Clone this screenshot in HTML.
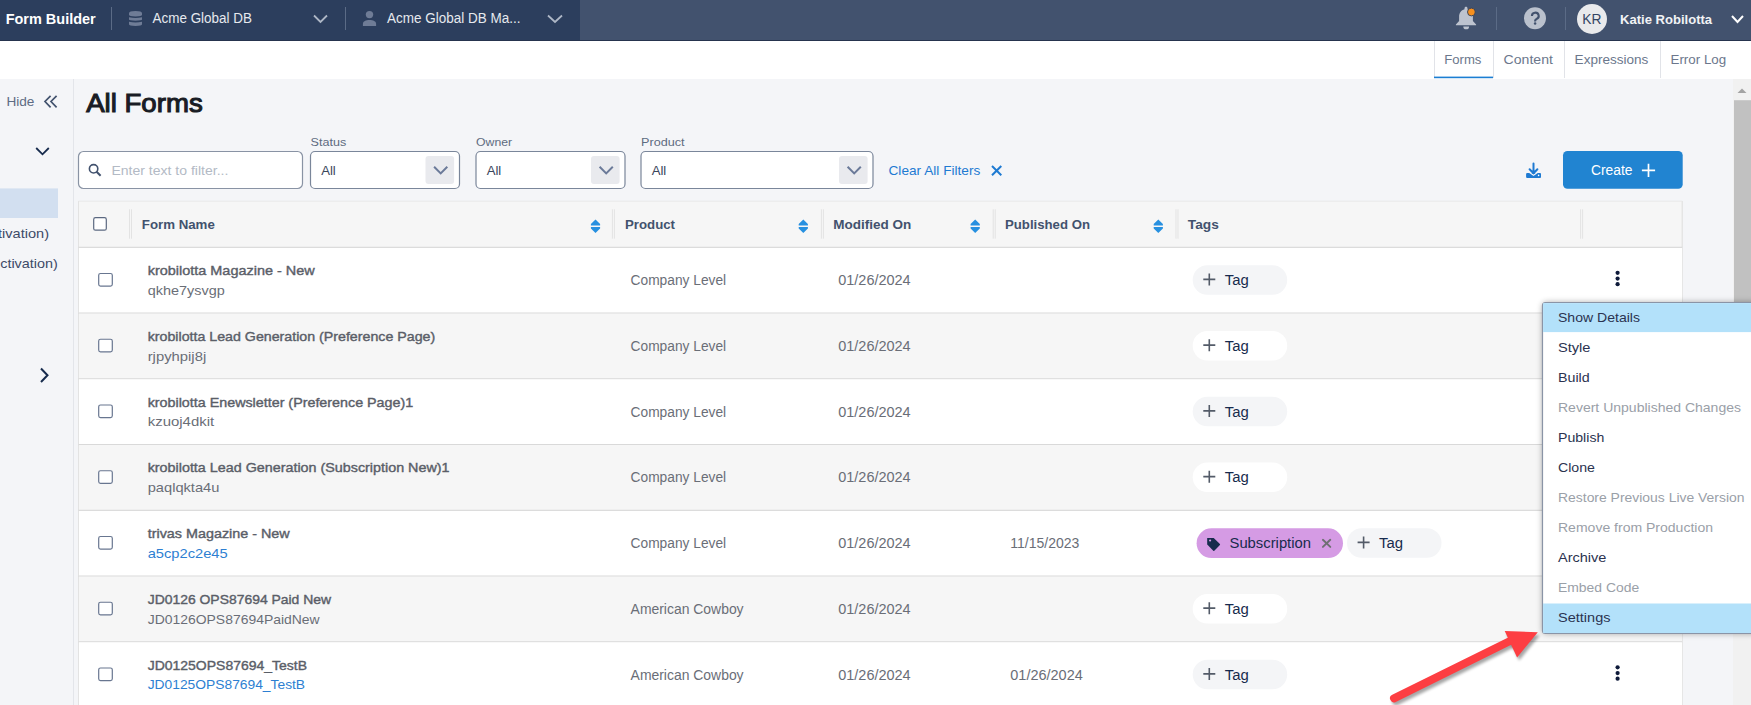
<!DOCTYPE html>
<html><head><meta charset="utf-8">
<style>
*{margin:0;padding:0}
html,body{width:1751px;height:705px;overflow:hidden;background:#f4f5f8}
svg{display:block;font-family:"Liberation Sans", sans-serif}
</style></head><body>
<svg width="1751" height="705" viewBox="0 0 1751 705">
<defs>
<filter id="sh" x="-20%" y="-20%" width="140%" height="140%"><feGaussianBlur stdDeviation="3"/></filter>
<filter id="sh2" x="-20%" y="-20%" width="140%" height="140%"><feGaussianBlur stdDeviation="1.5"/></filter>
</defs>
<rect x="0" y="0" width="1751" height="705" fill="#f4f5f8" />
<rect x="0" y="0" width="1751" height="41" fill="#42526e" />
<rect x="0" y="0" width="580" height="41" fill="#2c3e5d" />
<line x1="0" y1="40.5" x2="1751" y2="40.5" stroke="#26344e" stroke-width="1" />
<text x="5.7" y="24" font-size="15" fill="#ffffff" font-weight="bold" textLength="90" lengthAdjust="spacingAndGlyphs" >Form Builder</text>
<line x1="111.5" y1="7" x2="111.5" y2="30" stroke="#5b6b86" stroke-width="1" />
<path d="M129 13.3 q0 -2.4 6.5 -2.4 q6.5 0 6.5 2.4 v1.6 q0 1.3 -6.5 1.5 q-6.5 -0.2 -6.5 -1.5z M129 17.3 q6.5 1.5 13 0 v2.3 q0 1 -6.5 1.2 q-6.5 -0.2 -6.5 -1.2z M129 21.7 q6.5 1.5 13 0 v2.5 q0 1.7 -6.5 1.7 q-6.5 0 -6.5 -1.7z" fill="#6f7c96" />
<text x="152.6" y="22.8" font-size="14" fill="#e6e9ee" textLength="99.3" lengthAdjust="spacingAndGlyphs" >Acme Global DB</text>
<path d="M314 15.5 L320.5 22 L327 15.5" fill="none" stroke="#aeb7c6" stroke-width="1.8" />
<line x1="345.5" y1="7" x2="345.5" y2="30" stroke="#5b6b86" stroke-width="1" />
<circle cx="369.5" cy="14.6" r="3.7" fill="#6f7c96" />
<path d="M362.9 26 v-2.3 c0-2.6 3-3.8 6.6-3.8 s6.6 1.2 6.6 3.8 v2.3z" fill="#6f7c96" />
<text x="387" y="22.8" font-size="14" fill="#e6e9ee" textLength="133.4" lengthAdjust="spacingAndGlyphs" >Acme Global DB Ma...</text>
<path d="M548 15.5 L555 22 L562 15.5" fill="none" stroke="#aeb7c6" stroke-width="1.8" />
<path d="M1466 6.8 c-0.9 0 -1.5 0.7 -1.5 1.5 v0.9 c-3.4 0.9 -5.4 3.9 -5.4 7.4 v4.3 l-3.2 3.5 v0.8 h20.2 v-0.8 l-3.2 -3.5 v-4.3 c0 -3.5 -2 -6.5 -5.4 -7.4 v-0.9 c0 -0.8 -0.6 -1.5 -1.5 -1.5z M1463.3 26.4 h5.8 a2.9 2.9 0 0 1 -5.8 0z" fill="#bdc3cf" />
<circle cx="1471.4" cy="12" r="3.9" fill="#f7901e" stroke="#2c3e5d" stroke-width="0.9"/>
<line x1="1496.5" y1="7" x2="1496.5" y2="30" stroke="#5b6b86" stroke-width="1" />
<circle cx="1535" cy="18.2" r="11" fill="#bac1cd" />
<path d="M1531.9 16 a3.4 3.3 0 1 1 4.7 3 q-1.5 0.6 -1.5 2 v0.4" fill="none" stroke="#42526e" stroke-width="2.1" />
<circle cx="1535.1" cy="23.6" r="1.25" fill="#42526e" />
<line x1="1565.5" y1="7" x2="1565.5" y2="30" stroke="#5b6b86" stroke-width="1" />
<circle cx="1592" cy="19" r="15" fill="#e9eaec" />
<text x="1582.2" y="23.9" font-size="14" fill="#344563" textLength="19.2" lengthAdjust="spacingAndGlyphs" >KR</text>
<text x="1620.1" y="23.8" font-size="13.5" fill="#f1f2f5" font-weight="bold" textLength="92" lengthAdjust="spacingAndGlyphs" >Katie Robilotta</text>
<path d="M1732 16 L1737.5 22 L1743 16" fill="none" stroke="#ffffff" stroke-width="2" />
<rect x="0" y="41" width="1751" height="38" fill="#ffffff" />
<line x1="1434.5" y1="41" x2="1434.5" y2="78" stroke="#e1e3e8" stroke-width="1" />
<line x1="1493.5" y1="41" x2="1493.5" y2="78" stroke="#e1e3e8" stroke-width="1" />
<line x1="1564.5" y1="41" x2="1564.5" y2="78" stroke="#e1e3e8" stroke-width="1" />
<line x1="1660.5" y1="41" x2="1660.5" y2="78" stroke="#e1e3e8" stroke-width="1" />
<rect x="1434" y="76.6" width="59" height="1.6" fill="#1b7ed3" />
<text x="1444.2" y="64.3" font-size="13.5" fill="#6b778c" textLength="37.2" lengthAdjust="spacingAndGlyphs" >Forms</text>
<text x="1503.6" y="64.3" font-size="13.5" fill="#6b778c" textLength="49.3" lengthAdjust="spacingAndGlyphs" >Content</text>
<text x="1574.6" y="64.3" font-size="13.5" fill="#6b778c" textLength="73.8" lengthAdjust="spacingAndGlyphs" >Expressions</text>
<text x="1670.5" y="64.3" font-size="13.5" fill="#6b778c" textLength="55.7" lengthAdjust="spacingAndGlyphs" >Error Log</text>
<line x1="73.5" y1="79" x2="73.5" y2="705" stroke="#e3e5ea" stroke-width="1" />
<text x="6.4" y="106.3" font-size="13" fill="#5e6c84" textLength="28" lengthAdjust="spacingAndGlyphs" >Hide</text>
<path d="M50.6 95.8 L45 101.5 L50.6 107.3 M56.6 95.8 L51 101.5 L56.6 107.3" fill="none" stroke="#42526e" stroke-width="1.7" />
<path d="M36.2 148 L42.5 154.3 L48.8 148" fill="none" stroke="#172b4d" stroke-width="1.8" />
<rect x="0" y="188.4" width="58" height="29.6" fill="#d2dff0" />
<text x="49" y="238" font-size="13.5" fill="#3d4b68" textLength="51" lengthAdjust="spacingAndGlyphs" text-anchor="end">tivation)</text>
<text x="57.8" y="267.8" font-size="13.5" fill="#3d4b68" textLength="57.6" lengthAdjust="spacingAndGlyphs" text-anchor="end">ctivation)</text>
<path d="M41 368.5 L47.5 375.3 L41 382" fill="none" stroke="#172b4d" stroke-width="2" />
<text x="86.2" y="112" font-size="26.5" fill="#191c24" textLength="116.5" lengthAdjust="spacingAndGlyphs" stroke="#191c24" stroke-width="1.1">All Forms</text>
<rect x="78.5" y="151.5" width="224" height="37" fill="#ffffff" rx="5" stroke="#8993a4" stroke-width="1.2" />
<circle cx="93.6" cy="168.8" r="4.2" fill="none" stroke="#42526e" stroke-width="1.6"/>
<line x1="96.6" y1="171.8" x2="100.6" y2="175.8" stroke="#42526e" stroke-width="2" />
<text x="111.4" y="175" font-size="13.5" fill="#b3bac5" textLength="117" lengthAdjust="spacingAndGlyphs" >Enter text to filter...</text>
<text x="310.6" y="145.8" font-size="11.8" fill="#5e6b80" textLength="35.6" lengthAdjust="spacingAndGlyphs" >Status</text>
<rect x="310.5" y="151.5" width="149" height="37" fill="#ffffff" rx="4.5" stroke="#7a869a" stroke-width="1.2" />
<rect x="425.5" y="156" width="28.6" height="28" fill="#e9eaee" rx="3" />
<path d="M434.1 166.8 L440.7 173.4 L447.3 166.8" fill="none" stroke="#6b7a99" stroke-width="2" />
<text x="321.2" y="174.9" font-size="13.5" fill="#3a465c" textLength="14.6" lengthAdjust="spacingAndGlyphs" >All</text>
<text x="476.1" y="145.8" font-size="11.8" fill="#5e6b80" textLength="36" lengthAdjust="spacingAndGlyphs" >Owner</text>
<rect x="476.0" y="151.5" width="149" height="37" fill="#ffffff" rx="4.5" stroke="#7a869a" stroke-width="1.2" />
<rect x="591.0" y="156" width="28.6" height="28" fill="#e9eaee" rx="3" />
<path d="M599.6 166.8 L606.2 173.4 L612.8 166.8" fill="none" stroke="#6b7a99" stroke-width="2" />
<text x="486.7" y="174.9" font-size="13.5" fill="#3a465c" textLength="14.6" lengthAdjust="spacingAndGlyphs" >All</text>
<text x="641.1" y="145.8" font-size="11.8" fill="#5e6b80" textLength="43.5" lengthAdjust="spacingAndGlyphs" >Product</text>
<rect x="641.0" y="151.5" width="232" height="37" fill="#ffffff" rx="4.5" stroke="#7a869a" stroke-width="1.2" />
<rect x="839.0" y="156" width="28.6" height="28" fill="#e9eaee" rx="3" />
<path d="M847.6 166.8 L854.2 173.4 L860.8 166.8" fill="none" stroke="#6b7a99" stroke-width="2" />
<text x="651.7" y="174.9" font-size="13.5" fill="#3a465c" textLength="14.6" lengthAdjust="spacingAndGlyphs" >All</text>
<text x="888.5" y="174.8" font-size="13.5" fill="#1e7ad2" textLength="91.8" lengthAdjust="spacingAndGlyphs" >Clear All Filters</text>
<path d="M992 166 L1001.3 175.2 M1001.3 166 L992 175.2" fill="none" stroke="#1e7ad2" stroke-width="2" />
<rect x="1526.1" y="173.1" width="14.9" height="4.8" fill="#1e7ad2" rx="1" />
<path d="M1529.6 172.4 L1533.5 175.3 L1537.4 172.4" fill="none" stroke="#f4f5f8" stroke-width="1.3" />
<path d="M1533.5 163.5 V173.2 M1529.6 169.2 L1533.5 173.2 L1537.4 169.2" fill="none" stroke="#1e7ad2" stroke-width="2" stroke-linecap="round" stroke-linejoin="round"/>
<circle cx="1538.6" cy="175.4" r="0.8" fill="#ffffff" />
<rect x="1563" y="151" width="119.7" height="37.7" fill="#2184d1" rx="4.5" />
<text x="1591" y="175" font-size="14" fill="#ffffff" textLength="41.5" lengthAdjust="spacingAndGlyphs" >Create</text>
<path d="M1648.5 163.8 v13.3 M1641.9 170.4 h13.2" fill="none" stroke="#ffffff" stroke-width="1.7" />
<rect x="1733" y="79" width="18" height="626" fill="#f1f1f1" />
<path d="M1737.5 93 L1742 88.5 L1746.5 93z" fill="#a3a3a3" />
<rect x="1734" y="100.2" width="17" height="420" fill="#c1c1c1" />
<rect x="78.5" y="201.2" width="1604" height="504" fill="#ffffff" />
<rect x="78.5" y="201.2" width="1604" height="46" fill="#f6f6f6" />
<line x1="78.5" y1="201" x2="78.5" y2="705" stroke="#e3e3e3" stroke-width="1" />
<line x1="1682.2" y1="201" x2="1682.2" y2="705" stroke="#dcdcdc" stroke-width="1" />
<line x1="78.5" y1="201.2" x2="1682.2" y2="201.2" stroke="#e8e8e8" stroke-width="1" />
<line x1="78.5" y1="247.3" x2="1682.2" y2="247.3" stroke="#d9d9d9" stroke-width="1.2" />
<rect x="93.7" y="217.6" width="12.6" height="12.6" fill="#ffffff" rx="1.8" stroke="#5b6880" stroke-width="1.2" />
<line x1="129.5" y1="209.3" x2="129.5" y2="238.7" stroke="#e3e3e3" stroke-width="1" />
<line x1="131.5" y1="209.3" x2="131.5" y2="238.7" stroke="#e3e3e3" stroke-width="1" />
<line x1="612.4" y1="209.3" x2="612.4" y2="238.7" stroke="#e3e3e3" stroke-width="1" />
<line x1="614.4" y1="209.3" x2="614.4" y2="238.7" stroke="#e3e3e3" stroke-width="1" />
<line x1="821.4" y1="209.3" x2="821.4" y2="238.7" stroke="#e3e3e3" stroke-width="1" />
<line x1="823.4" y1="209.3" x2="823.4" y2="238.7" stroke="#e3e3e3" stroke-width="1" />
<line x1="993.2" y1="209.3" x2="993.2" y2="238.7" stroke="#e3e3e3" stroke-width="1" />
<line x1="995.2" y1="209.3" x2="995.2" y2="238.7" stroke="#e3e3e3" stroke-width="1" />
<line x1="1176" y1="209.3" x2="1176" y2="238.7" stroke="#e3e3e3" stroke-width="1" />
<line x1="1178" y1="209.3" x2="1178" y2="238.7" stroke="#e3e3e3" stroke-width="1" />
<line x1="1580.6" y1="209.3" x2="1580.6" y2="238.7" stroke="#e3e3e3" stroke-width="1" />
<line x1="1582.6" y1="209.3" x2="1582.6" y2="238.7" stroke="#e3e3e3" stroke-width="1" />
<path d="M595.5 219.5 L600.1 224 V225.4 H590.9 V224z M595.5 233.1 L600.1 228.6 V227.1 H590.9 V228.6z" fill="#2790e0" />
<path d="M803.3 219.5 L807.9 224 V225.4 H798.6999999999999 V224z M803.3 233.1 L807.9 228.6 V227.1 H798.6999999999999 V228.6z" fill="#2790e0" />
<path d="M975.2 219.5 L979.8000000000001 224 V225.4 H970.6 V224z M975.2 233.1 L979.8000000000001 228.6 V227.1 H970.6 V228.6z" fill="#2790e0" />
<path d="M1158.3 219.5 L1162.8999999999999 224 V225.4 H1153.7 V224z M1158.3 233.1 L1162.8999999999999 228.6 V227.1 H1153.7 V228.6z" fill="#2790e0" />
<text x="141.8" y="228.7" font-size="13.5" fill="#42526e" font-weight="bold" textLength="73" lengthAdjust="spacingAndGlyphs" >Form Name</text>
<text x="625" y="228.7" font-size="13.5" fill="#42526e" font-weight="bold" textLength="50" lengthAdjust="spacingAndGlyphs" >Product</text>
<text x="833.3" y="228.7" font-size="13.5" fill="#42526e" font-weight="bold" textLength="78" lengthAdjust="spacingAndGlyphs" >Modified On</text>
<text x="1005" y="228.7" font-size="13.5" fill="#42526e" font-weight="bold" textLength="85" lengthAdjust="spacingAndGlyphs" >Published On</text>
<text x="1187.8" y="228.7" font-size="13.5" fill="#42526e" font-weight="bold" textLength="31" lengthAdjust="spacingAndGlyphs" >Tags</text>
<rect x="79" y="247.9" width="1603" height="65.15" fill="#ffffff" />
<line x1="78.5" y1="313.05" x2="1682.2" y2="313.05" stroke="#d9d9d9" stroke-width="1.2" />
<rect x="98.7" y="273.5" width="13.6" height="12.6" fill="#ffffff" rx="1.8" stroke="#687690" stroke-width="1.2" />
<text x="147.7" y="275.1" font-size="13.5" fill="#5a5e68" textLength="167" lengthAdjust="spacingAndGlyphs" stroke="#5a5e68" stroke-width="0.4">krobilotta Magazine - New</text>
<text x="147.7" y="294.90000000000003" font-size="13.5" fill="#6a6e77" textLength="77" lengthAdjust="spacingAndGlyphs" >qkhe7ysvgp</text>
<text x="630.6" y="285.2" font-size="14" fill="#6a6e77" textLength="95.5" lengthAdjust="spacingAndGlyphs" >Company Level</text>
<text x="838.2" y="285.2" font-size="14" fill="#6a6e77" textLength="72.5" lengthAdjust="spacingAndGlyphs" >01/26/2024</text>
<rect x="1192.7" y="265.3" width="94.5" height="29.5" fill="#f4f5f7" rx="14.75" />
<path d="M1209.3 273.40000000000003 v12 M1203.3 279.40000000000003 h12" fill="none" stroke="#535b68" stroke-width="1.6" />
<text x="1224.7" y="285.1" font-size="14" fill="#172b4d" textLength="24" lengthAdjust="spacingAndGlyphs" >Tag</text>
<circle cx="1617.6" cy="272.8" r="2.1" fill="#0e1a3a" />
<circle cx="1617.6" cy="278.6" r="2.1" fill="#0e1a3a" />
<circle cx="1617.6" cy="284.20000000000005" r="2.1" fill="#0e1a3a" />
<rect x="79" y="313.65000000000003" width="1603" height="65.15" fill="#f6f6f6" />
<line x1="78.5" y1="378.8" x2="1682.2" y2="378.8" stroke="#d9d9d9" stroke-width="1.2" />
<rect x="98.7" y="339.25" width="13.6" height="12.6" fill="#ffffff" rx="1.8" stroke="#687690" stroke-width="1.2" />
<text x="147.7" y="340.85" font-size="13.5" fill="#5a5e68" textLength="287.5" lengthAdjust="spacingAndGlyphs" stroke="#5a5e68" stroke-width="0.4">krobilotta Lead Generation (Preference Page)</text>
<text x="147.7" y="360.65000000000003" font-size="13.5" fill="#6a6e77" textLength="58.5" lengthAdjust="spacingAndGlyphs" >rjpyhpij8j</text>
<text x="630.6" y="350.95" font-size="14" fill="#6a6e77" textLength="95.5" lengthAdjust="spacingAndGlyphs" >Company Level</text>
<text x="838.2" y="350.95" font-size="14" fill="#6a6e77" textLength="72.5" lengthAdjust="spacingAndGlyphs" >01/26/2024</text>
<rect x="1192.7" y="331.05" width="94.5" height="29.5" fill="#ffffff" rx="14.75" />
<path d="M1209.3 339.15000000000003 v12 M1203.3 345.15000000000003 h12" fill="none" stroke="#535b68" stroke-width="1.6" />
<text x="1224.7" y="350.85" font-size="14" fill="#172b4d" textLength="24" lengthAdjust="spacingAndGlyphs" >Tag</text>
<circle cx="1617.6" cy="338.55" r="2.1" fill="#0e1a3a" />
<circle cx="1617.6" cy="344.35" r="2.1" fill="#0e1a3a" />
<circle cx="1617.6" cy="349.95000000000005" r="2.1" fill="#0e1a3a" />
<rect x="79" y="379.40000000000003" width="1603" height="65.15" fill="#ffffff" />
<line x1="78.5" y1="444.55" x2="1682.2" y2="444.55" stroke="#d9d9d9" stroke-width="1.2" />
<rect x="98.7" y="405.0" width="13.6" height="12.6" fill="#ffffff" rx="1.8" stroke="#687690" stroke-width="1.2" />
<text x="147.7" y="406.6" font-size="13.5" fill="#5a5e68" textLength="265.5" lengthAdjust="spacingAndGlyphs" stroke="#5a5e68" stroke-width="0.4">krobilotta Enewsletter (Preference Page)1</text>
<text x="147.7" y="426.40000000000003" font-size="13.5" fill="#6a6e77" textLength="66.5" lengthAdjust="spacingAndGlyphs" >kzuoj4dkit</text>
<text x="630.6" y="416.7" font-size="14" fill="#6a6e77" textLength="95.5" lengthAdjust="spacingAndGlyphs" >Company Level</text>
<text x="838.2" y="416.7" font-size="14" fill="#6a6e77" textLength="72.5" lengthAdjust="spacingAndGlyphs" >01/26/2024</text>
<rect x="1192.7" y="396.8" width="94.5" height="29.5" fill="#f4f5f7" rx="14.75" />
<path d="M1209.3 404.90000000000003 v12 M1203.3 410.90000000000003 h12" fill="none" stroke="#535b68" stroke-width="1.6" />
<text x="1224.7" y="416.6" font-size="14" fill="#172b4d" textLength="24" lengthAdjust="spacingAndGlyphs" >Tag</text>
<circle cx="1617.6" cy="404.3" r="2.1" fill="#0e1a3a" />
<circle cx="1617.6" cy="410.1" r="2.1" fill="#0e1a3a" />
<circle cx="1617.6" cy="415.70000000000005" r="2.1" fill="#0e1a3a" />
<rect x="79" y="445.15000000000003" width="1603" height="65.15" fill="#f6f6f6" />
<line x1="78.5" y1="510.3" x2="1682.2" y2="510.3" stroke="#d9d9d9" stroke-width="1.2" />
<rect x="98.7" y="470.75" width="13.6" height="12.6" fill="#ffffff" rx="1.8" stroke="#687690" stroke-width="1.2" />
<text x="147.7" y="472.35" font-size="13.5" fill="#5a5e68" textLength="301.8" lengthAdjust="spacingAndGlyphs" stroke="#5a5e68" stroke-width="0.4">krobilotta Lead Generation (Subscription New)1</text>
<text x="147.7" y="492.15000000000003" font-size="13.5" fill="#6a6e77" textLength="71.7" lengthAdjust="spacingAndGlyphs" >paqlqkta4u</text>
<text x="630.6" y="482.45" font-size="14" fill="#6a6e77" textLength="95.5" lengthAdjust="spacingAndGlyphs" >Company Level</text>
<text x="838.2" y="482.45" font-size="14" fill="#6a6e77" textLength="72.5" lengthAdjust="spacingAndGlyphs" >01/26/2024</text>
<rect x="1192.7" y="462.55" width="94.5" height="29.5" fill="#ffffff" rx="14.75" />
<path d="M1209.3 470.65000000000003 v12 M1203.3 476.65000000000003 h12" fill="none" stroke="#535b68" stroke-width="1.6" />
<text x="1224.7" y="482.35" font-size="14" fill="#172b4d" textLength="24" lengthAdjust="spacingAndGlyphs" >Tag</text>
<circle cx="1617.6" cy="470.05" r="2.1" fill="#0e1a3a" />
<circle cx="1617.6" cy="475.85" r="2.1" fill="#0e1a3a" />
<circle cx="1617.6" cy="481.45000000000005" r="2.1" fill="#0e1a3a" />
<rect x="79" y="510.90000000000003" width="1603" height="65.15" fill="#ffffff" />
<line x1="78.5" y1="576.05" x2="1682.2" y2="576.05" stroke="#d9d9d9" stroke-width="1.2" />
<rect x="98.7" y="536.5" width="13.6" height="12.6" fill="#ffffff" rx="1.8" stroke="#687690" stroke-width="1.2" />
<text x="147.7" y="538.1" font-size="13.5" fill="#5a5e68" textLength="142" lengthAdjust="spacingAndGlyphs" stroke="#5a5e68" stroke-width="0.4">trivas Magazine - New</text>
<text x="147.7" y="557.9" font-size="13.5" fill="#2d7fd2" textLength="80" lengthAdjust="spacingAndGlyphs" >a5cp2c2e45</text>
<text x="630.6" y="548.2" font-size="14" fill="#6a6e77" textLength="95.5" lengthAdjust="spacingAndGlyphs" >Company Level</text>
<text x="838.2" y="548.2" font-size="14" fill="#6a6e77" textLength="72.5" lengthAdjust="spacingAndGlyphs" >01/26/2024</text>
<text x="1010.3" y="548.2" font-size="14" fill="#6a6e77" textLength="69" lengthAdjust="spacingAndGlyphs" >11/15/2023</text>
<rect x="1196.6" y="528.3" width="146.4" height="29.8" fill="#d59be4" rx="14.9" />
<path d="M1207.2 537.9 h6.5 l6.2 6.2 q0.4 0.5 0 1 l-5.6 5.6 q-0.5 0.4 -1 0 l-6.1 -6.1z" fill="#172b4d" />
<circle cx="1210.1" cy="540.5" r="1.1" fill="#d59be4" />
<text x="1229.5" y="548.0" font-size="14" fill="#172b4d" textLength="81.5" lengthAdjust="spacingAndGlyphs" >Subscription</text>
<path d="M1322.9 539.8 L1330.3 546.9 M1330.3 539.8 L1322.9 546.9" fill="none" stroke="#6e6f72" stroke-width="1.9" stroke-linecap="round"/>
<rect x="1347" y="528.3" width="94.5" height="29.5" fill="#f4f5f7" rx="14.75" />
<path d="M1363.6 536.4 v12 M1357.6 542.4 h12" fill="none" stroke="#535b68" stroke-width="1.6" />
<text x="1379" y="548.1" font-size="14" fill="#172b4d" textLength="24" lengthAdjust="spacingAndGlyphs" >Tag</text>
<circle cx="1617.6" cy="535.8000000000001" r="2.1" fill="#0e1a3a" />
<circle cx="1617.6" cy="541.6" r="2.1" fill="#0e1a3a" />
<circle cx="1617.6" cy="547.2" r="2.1" fill="#0e1a3a" />
<rect x="79" y="576.65" width="1603" height="65.15" fill="#f6f6f6" />
<line x1="78.5" y1="641.8" x2="1682.2" y2="641.8" stroke="#d9d9d9" stroke-width="1.2" />
<rect x="98.7" y="602.25" width="13.6" height="12.6" fill="#ffffff" rx="1.8" stroke="#687690" stroke-width="1.2" />
<text x="147.7" y="603.8499999999999" font-size="13.5" fill="#5a5e68" textLength="183.4" lengthAdjust="spacingAndGlyphs" stroke="#5a5e68" stroke-width="0.4">JD0126 OPS87694 Paid New</text>
<text x="147.7" y="623.65" font-size="13.5" fill="#6a6e77" textLength="172" lengthAdjust="spacingAndGlyphs" >JD0126OPS87694PaidNew</text>
<text x="630.6" y="613.9499999999999" font-size="14" fill="#6a6e77" textLength="113" lengthAdjust="spacingAndGlyphs" >American Cowboy</text>
<text x="838.2" y="613.9499999999999" font-size="14" fill="#6a6e77" textLength="72.5" lengthAdjust="spacingAndGlyphs" >01/26/2024</text>
<rect x="1192.7" y="594.05" width="94.5" height="29.5" fill="#ffffff" rx="14.75" />
<path d="M1209.3 602.15 v12 M1203.3 608.15 h12" fill="none" stroke="#535b68" stroke-width="1.6" />
<text x="1224.7" y="613.8499999999999" font-size="14" fill="#172b4d" textLength="24" lengthAdjust="spacingAndGlyphs" >Tag</text>
<circle cx="1617.6" cy="601.55" r="2.1" fill="#0e1a3a" />
<circle cx="1617.6" cy="607.3499999999999" r="2.1" fill="#0e1a3a" />
<circle cx="1617.6" cy="612.9499999999999" r="2.1" fill="#0e1a3a" />
<rect x="79" y="642.4" width="1603" height="65.15" fill="#ffffff" />
<line x1="78.5" y1="707.55" x2="1682.2" y2="707.55" stroke="#d9d9d9" stroke-width="1.2" />
<rect x="98.7" y="668.0" width="13.6" height="12.6" fill="#ffffff" rx="1.8" stroke="#687690" stroke-width="1.2" />
<text x="147.7" y="669.5999999999999" font-size="13.5" fill="#5a5e68" textLength="159.3" lengthAdjust="spacingAndGlyphs" stroke="#5a5e68" stroke-width="0.4">JD0125OPS87694_TestB</text>
<text x="147.7" y="689.4" font-size="13.5" fill="#2d7fd2" textLength="157.4" lengthAdjust="spacingAndGlyphs" >JD0125OPS87694_TestB</text>
<text x="630.6" y="679.6999999999999" font-size="14" fill="#6a6e77" textLength="113" lengthAdjust="spacingAndGlyphs" >American Cowboy</text>
<text x="838.2" y="679.6999999999999" font-size="14" fill="#6a6e77" textLength="72.5" lengthAdjust="spacingAndGlyphs" >01/26/2024</text>
<text x="1010.3" y="679.6999999999999" font-size="14" fill="#6a6e77" textLength="72.5" lengthAdjust="spacingAndGlyphs" >01/26/2024</text>
<rect x="1192.7" y="659.8" width="94.5" height="29.5" fill="#f4f5f7" rx="14.75" />
<path d="M1209.3 667.9 v12 M1203.3 673.9 h12" fill="none" stroke="#535b68" stroke-width="1.6" />
<text x="1224.7" y="679.5999999999999" font-size="14" fill="#172b4d" textLength="24" lengthAdjust="spacingAndGlyphs" >Tag</text>
<circle cx="1617.6" cy="667.3" r="2.1" fill="#0e1a3a" />
<circle cx="1617.6" cy="673.0999999999999" r="2.1" fill="#0e1a3a" />
<circle cx="1617.6" cy="678.6999999999999" r="2.1" fill="#0e1a3a" />
<rect x="1542.5" y="302.5" width="215" height="331" fill="#000000" rx="4" filter="url(#sh)" opacity="0.35"/>
<rect x="1542.5" y="302.5" width="215" height="331" fill="#ffffff" rx="3" stroke="#8a94a6" stroke-width="1.2" />
<rect x="1543.1" y="303.1" width="214" height="29" fill="#b3e1fa" />
<rect x="1543.1" y="603.5" width="214" height="29.5" fill="#b3e1fa" />
<text x="1558" y="321.9" font-size="13.5" fill="#2b3350" textLength="82" lengthAdjust="spacingAndGlyphs" >Show Details</text>
<text x="1558" y="351.9" font-size="13.5" fill="#2b3350" textLength="32.5" lengthAdjust="spacingAndGlyphs" >Style</text>
<text x="1558" y="381.9" font-size="13.5" fill="#2b3350" textLength="31.7" lengthAdjust="spacingAndGlyphs" >Build</text>
<text x="1558" y="411.9" font-size="13.5" fill="#9aa0a8" textLength="183" lengthAdjust="spacingAndGlyphs" >Revert Unpublished Changes</text>
<text x="1558" y="441.9" font-size="13.5" fill="#2b3350" textLength="46.3" lengthAdjust="spacingAndGlyphs" >Publish</text>
<text x="1558" y="471.9" font-size="13.5" fill="#2b3350" textLength="37" lengthAdjust="spacingAndGlyphs" >Clone</text>
<text x="1558" y="501.9" font-size="13.5" fill="#9aa0a8" textLength="186.5" lengthAdjust="spacingAndGlyphs" >Restore Previous Live Version</text>
<text x="1558" y="531.9" font-size="13.5" fill="#9aa0a8" textLength="155" lengthAdjust="spacingAndGlyphs" >Remove from Production</text>
<text x="1558" y="561.9" font-size="13.5" fill="#2b3350" textLength="48.4" lengthAdjust="spacingAndGlyphs" >Archive</text>
<text x="1558" y="591.9" font-size="13.5" fill="#9aa0a8" textLength="81.2" lengthAdjust="spacingAndGlyphs" >Embed Code</text>
<text x="1558" y="621.9" font-size="13.5" fill="#2b3350" textLength="52.5" lengthAdjust="spacingAndGlyphs" >Settings</text>
<path d="M1394 698.3 L1512 640" fill="none" stroke="#000" stroke-width="8" stroke-linecap="round" opacity="0.35" filter="url(#sh2)" transform="translate(2,3)"/>
<path d="M1504.7 630.9 L1537.8 632.2 L1517.1 657.4z" fill="#000" opacity="0.35" filter="url(#sh2)" transform="translate(2,3)"/>
<path d="M1394 698.3 L1512 640" fill="none" stroke="#fd3e42" stroke-width="8" stroke-linecap="round"/>
<path d="M1504.7 630.9 L1537.8 632.2 L1517.1 657.4z" fill="#fd3e42" />
</svg>
</body></html>
